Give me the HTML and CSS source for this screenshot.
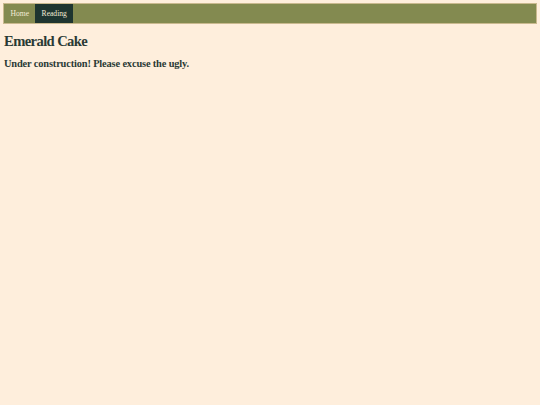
FILE: index.html
```html
<!DOCTYPE html>
<html>
<head>
<meta charset="utf-8">
<link rel="stylesheet" href="styles.css">
</head>
<body>
<nav class="nav">
  <a class="tab" href="#">Home</a>
  <a class="tab active" href="#">Reading</a>
</nav>
<h1 class="title">Emerald Cake</h1>
<h2 class="sub">Under construction! Please excuse the ugly.</h2>
</body>
</html>
```

FILE: styles.css
```css
html, body {
  background: #feeedc;
}
body {
  margin: 3px;
  font-family: "Liberation Serif", serif;
  color: #2a3a35;
}
.nav {
  display: flex;
  background: #838a50;
  border: 1px solid #c9b98e;
  height: 19px;
}
.tab {
  display: flex;
  align-items: center;
  padding: 0 6px 0 6.5px;
  font-size: 7.6px;
  color: #f3ead6;
  text-decoration: none;
}
.tab.active {
  background: #1e3530;
}
.title {
  font-size: 14.6px;
  letter-spacing: -0.6px;
  margin: 9px 0 0 1px;
  font-weight: bold;
}
.sub {
  font-size: 10.4px;
  letter-spacing: -0.15px;
  margin: 8px 0 0 1px;
  font-weight: bold;
}
```
